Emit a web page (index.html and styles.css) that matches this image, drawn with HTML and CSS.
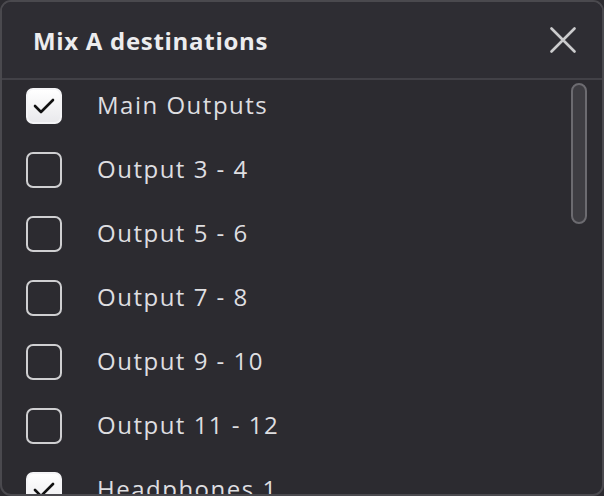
FILE: index.html
```html
<!DOCTYPE html>
<html>
<head>
<meta charset="utf-8">
<link rel="stylesheet" href="styles.css">
</head>
<body>
<div class="window">
  <div class="header">
    <h1 class="title">Mix A destinations</h1>
    <button class="close" aria-label="Close">
      <svg width="26" height="26" viewBox="0 0 26 26"><path d="M1.5 1.5 L24.5 24.5 M24.5 1.5 L1.5 24.5" stroke="#cbcbcd" stroke-width="2.6" stroke-linecap="round" fill="none"/></svg>
    </button>
  </div>
  <div class="list">
    <div class="rows">
      <div class="row"><span class="box checked"><svg width="22" height="18" viewBox="0 0 22 18"><path d="M2 9 L8 15 L20 3" stroke="#111" stroke-width="2.6" fill="none" stroke-linecap="round" stroke-linejoin="round"/></svg></span><span class="label">Main Outputs</span></div>
      <div class="row"><span class="box"></span><span class="label">Output 3 - 4</span></div>
      <div class="row"><span class="box"></span><span class="label">Output 5 - 6</span></div>
      <div class="row"><span class="box"></span><span class="label">Output 7 - 8</span></div>
      <div class="row"><span class="box"></span><span class="label">Output 9 - 10</span></div>
      <div class="row"><span class="box"></span><span class="label">Output 11 - 12</span></div>
      <div class="row"><span class="box checked"><svg width="22" height="18" viewBox="0 0 22 18"><path d="M2 9 L8 15 L20 3" stroke="#111" stroke-width="2.6" fill="none" stroke-linecap="round" stroke-linejoin="round"/></svg></span><span class="label">Headphones 1</span></div>
    </div>
    <div class="scrollbar"></div>
  </div>
</div>
</body>
</html>
```
FILE: styles.css
```css
html, body {
  margin: 0;
  padding: 0;
  background: #2c2b30;
}
.window {
  box-sizing: border-box;
  width: 604px;
  height: 496px;
  border: 2px solid #4a494e;
  border-radius: 11px;
  overflow: hidden;
  background: #2c2b30;
  display: flex;
  flex-direction: column;
  font-family: "Open Sans", Lato, sans-serif;
}
.header {
  height: 76px;
  flex: none;
  display: flex;
  align-items: center;
  justify-content: space-between;
  padding: 0 26px 0 31px;
  background: #2e2d33;
  border-bottom: 2px solid #424147;
}
.title {
  margin: 0;
  font-size: 24px;
  font-weight: 700;
  color: #ececee;
  letter-spacing: 0.7px;
}
.close {
  background: none;
  border: 0;
  padding: 0;
  width: 26px;
  height: 26px;
  display: flex;
  align-items: center;
  justify-content: center;
}
.list {
  flex: 1;
  display: flex;
  overflow: hidden;
}
.rows {
  flex: 1;
  padding-top: 8px;
  padding-left: 24px;
}
.row {
  height: 64px;
  display: flex;
  align-items: flex-start;
}
.box {
  box-sizing: border-box;
  width: 36px;
  height: 36px;
  border: 2px solid #cfcfd1;
  border-radius: 7px;
  flex: none;
  display: flex;
  align-items: center;
  justify-content: center;
}
.box.checked {
  background: linear-gradient(#ffffff, #e9e9ec);
  border-color: #f4f4f6;
}
.label {
  margin-left: 35px;
  font-size: 24px;
  line-height: 34px;
  color: #dedee0;
  letter-spacing: 1.5px;
}
.scrollbar {
  box-sizing: border-box;
  flex: none;
  width: 16px;
  height: 141px;
  margin: 3px 15px 0 0;
  background: #3e3d42;
  border: 2px solid #6c6b70;
  border-radius: 8px;
}
```
